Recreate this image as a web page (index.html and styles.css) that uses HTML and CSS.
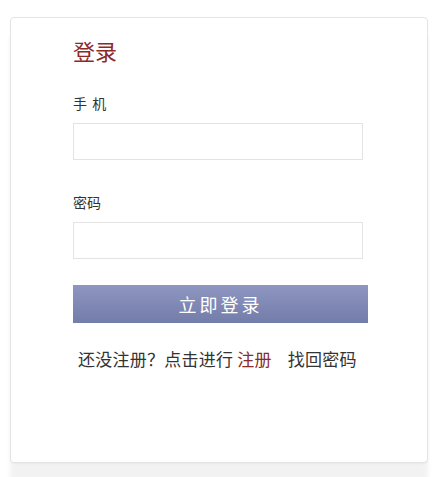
FILE: index.html
```html
<!DOCTYPE html>
<html lang="zh">
<head>
<meta charset="utf-8">
<title>登录</title>
<link rel="stylesheet" href="styles.css">
</head>
<body>
<div class="card">
  <div class="form">
    <h1 class="title">登录</h1>
    <label class="label">手 机</label>
    <input class="field" type="text">
    <label class="label label-pw">密码</label>
    <input class="field" type="password">
    <button class="btn">立即登录</button>
    <p class="links">还没注册？点击进行 <a class="reg">注册</a><a class="find">找回密码</a></p>
  </div>
</div>
</body>
</html>
```
FILE: styles.css
```css
html, body {
  margin: 0;
  padding: 0;
  background: #fff;
  font-family: "Microsoft YaHei", "Noto Sans CJK SC", "Liberation Sans", sans-serif;
}
body {
  min-height: 477px;
}
.card {
  box-sizing: border-box;
  margin: 17px 0 0 10px;
  width: 418px;
  height: 446px;
  border: 1px solid #e4e4e4;
  border-radius: 4px;
  background: #fff;
  box-shadow: 0 1px 2px rgba(0,0,0,0.04), 0 18px 4px 0 rgba(0,0,0,0.05);
}
.form {
  padding: 0 0 0 62px;
  display: flex;
  flex-direction: column;
  align-items: flex-start;
}
.title {
  margin: 17px 0 0 0;
  font-size: 22px;
  font-weight: normal;
  line-height: 30px;
  color: #8a2a2a;
}
.label {
  margin-top: 28px;
  font-size: 14px;
  line-height: 20px;
  color: #333;
  letter-spacing: 1px;
}
.label-pw {
  margin-top: 32px;
  letter-spacing: 0;
}
.field {
  box-sizing: border-box;
  margin: 10px 0 0 0;
  width: 290px;
  height: 37px;
  border: 1px solid #e3e3e3;
  padding: 0 8px;
  outline: none;
}
.btn {
  margin-top: 26px;
  width: 295px;
  height: 38px;
  border: none;
  background: linear-gradient(#8e96c1, #737da9);
  color: #fff;
  font-family: inherit;
  font-size: 18px;
  letter-spacing: 3px;
  padding: 0;
}
.links {
  margin: 24px 0 0 5px;
  font-size: 17px;
  line-height: 24px;
  color: #333;
  letter-spacing: 0.25px;
}
.reg {
  color: #8a2a2a;
}
.find {
  color: #333;
  margin-left: 16px;
}
```
